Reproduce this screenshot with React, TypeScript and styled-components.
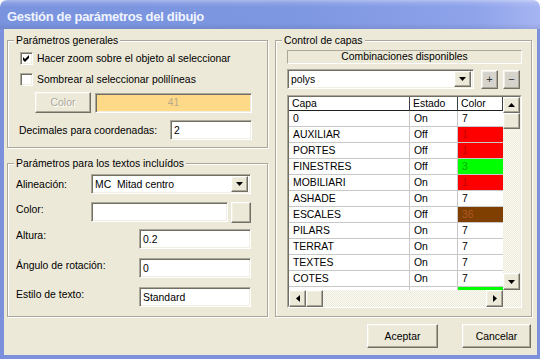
import React from 'react';
import styled, { createGlobalStyle, css } from 'styled-components';

const GlobalStyle = createGlobalStyle`
  html, body {
    margin: 0;
    padding: 0;
    background: #fff;
  }
  body {
    font-family: "Liberation Sans", Arial, sans-serif;
    font-size: 10.4px;
    color: #000;
  }
`;

const raised = css`
  box-sizing: border-box;
  border-style: solid;
  border-width: 1px;
  border-color: #fff #716f64 #716f64 #fff;
  box-shadow: inset -1px -1px 0 #aca899, inset 1px 1px 0 #f1efe2;
  background: #ece9d8;
`;

const sunken = css`
  box-sizing: border-box;
  border-style: solid;
  border-width: 1px;
  border-color: #aca899 #fff #fff #aca899;
  box-shadow: inset 1px 1px 0 #716f64, inset -1px -1px 0 #f1efe2;
`;

const Window = styled.div`
  width: 540px;
  height: 359px;
  display: flex;
  flex-direction: column;
`;

const TitleBar = styled.div`
  height: 29px;
  flex: none;
  box-sizing: border-box;
  border-radius: 7px 7px 0 0;
  padding: 4px 0 0 7px;
  display: flex;
  align-items: center;
  background:
    linear-gradient(180deg, rgba(255,255,255,.35) 0, rgba(255,255,255,.12) 3px, rgba(255,255,255,0) 7px, rgba(0,0,0,0) 23px, rgba(0,0,0,.08) 29px),
    linear-gradient(90deg, #7a93de 0%, #7e97e1 55%, #8ea3ea 88%, #a6b4f2 100%);
  font-family: "Liberation Sans", Arial, sans-serif;
  font-weight: bold;
  font-size: 13px;
  letter-spacing: -0.3px;
  color: #f0f4ff;
`;

const Frame = styled.div`
  flex: 1;
  border-style: solid;
  border-color: #7c91dc;
  border-width: 0 3px 4px 4px;
  background: #ece9d8;
  display: grid;
  grid-template-columns: 261px 257px;
  column-gap: 7px;
  align-content: start;
  padding: 5px 5px 0 3px;
`;

const Column = styled.div`
  display: flex;
  flex-direction: column;
`;

const GroupBox = styled.div<{ $mt: number; $h: number }>`
  margin-top: ${p => p.$mt}px;
  height: ${p => p.$h}px;
  box-sizing: border-box;
  border: 1px solid #aca899;
  box-shadow: inset 1px 1px 0 #fff, 1px 1px 0 #fff;
  display: flex;
  flex-direction: column;
`;

const Legend = styled.div`
  align-self: flex-start;
  margin: -7px 0 0 6px;
  padding: 0 2px;
  line-height: 13px;
  background: #ece9d8;
`;

const Row = styled.div<{ $mt: number; $ml?: number; $mr?: number }>`
  display: flex;
  align-items: center;
  margin-top: ${p => p.$mt}px;
  margin-left: ${p => p.$ml ?? 0}px;
  margin-right: ${p => p.$mr ?? 0}px;
`;

const FieldRow = styled(Row)`
  align-items: flex-start;
`;

const CheckBox = styled.div`
  width: 13px;
  height: 13px;
  ${sunken};
  background: #fff;
  display: flex;
  align-items: center;
  justify-content: center;
  margin-right: 4px;
`;

const Label = styled.div<{ $w?: number; $pt?: number }>`
  line-height: 13px;
  white-space: pre;
  ${p => (p.$w ? `width: ${p.$w}px; flex: none;` : 'flex: 1;')}
  padding-top: ${p => p.$pt ?? 0}px;
`;

const Button = styled.div<{ $w: number; $h: number; $disabled?: boolean }>`
  ${raised};
  width: ${p => p.$w}px;
  height: ${p => p.$h}px;
  flex: none;
  display: flex;
  align-items: center;
  justify-content: center;
  color: ${p => (p.$disabled ? '#aca899' : '#000')};
  text-shadow: ${p => (p.$disabled ? '1px 1px 0 #fff' : 'none')};
`;

const SmallButton = styled(Button)`
  background: #d6d3cc;
  color: #333;
  font-size: 11px;
`;

const Gap = styled.div<{ $w: number }>`
  flex: none;
  width: ${p => p.$w}px;
`;

const ColorSwatch = styled.div`
  ${sunken};
  width: 157px;
  height: 20px;
  margin-left: 4px;
  background: #fdd988;
  color: #b8ab86;
  display: flex;
  align-items: center;
  justify-content: center;
`;

const TextBox = styled.div<{ $w: number }>`
  ${sunken};
  width: ${p => p.$w}px;
  height: 20px;
  flex: none;
  background: #fff;
  padding-left: 3px;
  display: flex;
  align-items: center;
  white-space: pre;
`;

const Combo = styled(TextBox)`
  padding-right: 2px;
  justify-content: space-between;
`;

const ComboArrow = styled.div`
  ${raised};
  width: 17px;
  height: 16px;
  display: flex;
  align-items: center;
  justify-content: center;
`;

const Static = styled.div`
  margin: 3px 0 0 11px;
  width: 235px;
  height: 14px;
  box-sizing: border-box;
  border: 1px solid;
  border-color: #aca899 #fff #fff #aca899;
  display: flex;
  align-items: center;
  justify-content: center;
  line-height: 12px;
`;

const GridFrame = styled.div`
  margin: 6px 0 0 11px;
  width: 235px;
  height: 213px;
  box-sizing: border-box;
  border: 1px solid;
  border-color: #aca899 #fff #fff #aca899;
`;

const GridInner = styled.div`
  height: 100%;
  box-sizing: border-box;
  border: 1px solid;
  border-color: #716f64 #f1efe2 #f1efe2 #716f64;
  display: grid;
  grid-template-columns: 214px 17px;
  grid-template-rows: 193px 17px;
  background: #fff;
`;

const Table = styled.div`
  overflow: hidden;
  display: grid;
  grid-template-columns: 121px 48px 45px;
  grid-template-rows: 14px;
  grid-auto-rows: 16px;
`;

const HeadCell = styled.div`
  box-sizing: border-box;
  background: #fff;
  border-right: 1px solid #404040;
  border-bottom: 1px solid #202020;
  padding-left: 3px;
  display: flex;
  align-items: center;
  line-height: 12px;
`;

const Cell = styled.div<{ $bg?: string; $fg?: string; $last?: boolean }>`
  box-sizing: border-box;
  border-bottom: 1px solid #c8c8c8;
  border-right: ${p => (p.$last ? 'none' : '1px solid #c8c8c8')};
  background: ${p => p.$bg ?? '#fff'};
  color: ${p => p.$fg ?? '#000'};
  padding-left: 4px;
  display: flex;
  align-items: center;
  line-height: 13px;
`;

const track = css`
  background-color: #fff;
  background-image: repeating-conic-gradient(#ece9d8 0 25%, #fbfbf8 0 50%);
  background-size: 2px 2px;
`;

const VScroll = styled.div`
  ${track};
  display: flex;
  flex-direction: column;
`;

const HScroll = styled.div`
  ${track};
  display: flex;
`;

const Corner = styled.div`
  ${track};
`;

const ScrollBtn = styled.div<{ $w: number; $h: number }>`
  ${raised};
  width: ${p => p.$w}px;
  height: ${p => p.$h}px;
  flex: none;
  display: flex;
  align-items: center;
  justify-content: center;
`;

const Spacer = styled.div`
  flex: 1;
`;

const Footer = styled.div`
  grid-column: 1 / -1;
  display: flex;
  justify-content: flex-end;
  gap: 24px;
  margin-top: 7px;
  padding-right: 1px;
`;

const Check = () => (
  <svg width="7" height="7" viewBox="0 0 7 7">
    <polygon points="0,2 2,4 6,0 6,3 2,7 0,5" fill="#000" />
  </svg>
);

const Arrow = ({ dir }: { dir: 'up' | 'down' | 'left' | 'right' }) => {
  const pts = {
    down: '0,0 7,0 3.5,4',
    up: '0,4 7,4 3.5,0',
    left: '4,0 4,7 0,3.5',
    right: '0,0 0,7 4,3.5',
  }[dir];
  const vertical = dir === 'up' || dir === 'down';
  return (
    <svg width={vertical ? 7 : 4} height={vertical ? 4 : 7} viewBox={vertical ? '0 0 7 4' : '0 0 4 7'}>
      <polygon points={pts} fill="#000" />
    </svg>
  );
};

type Layer = { name: string; state: string; color: string; bg?: string; fg?: string };

const RED = { bg: '#ff0000', fg: '#c00000' };
const GREEN = { bg: '#00ff00', fg: '#00a800' };

const layers: Layer[] = [
  { name: '0', state: 'On', color: '7' },
  { name: 'AUXILIAR', state: 'Off', color: '1', ...RED },
  { name: 'PORTES', state: 'Off', color: '1', ...RED },
  { name: 'FINESTRES', state: 'Off', color: '3', ...GREEN },
  { name: 'MOBILIARI', state: 'On', color: '1', ...RED },
  { name: 'ASHADE', state: 'On', color: '7' },
  { name: 'ESCALES', state: 'Off', color: '36', bg: '#7f3f00', fg: '#b0582a' },
  { name: 'PILARS', state: 'On', color: '7' },
  { name: 'TERRAT', state: 'On', color: '7' },
  { name: 'TEXTES', state: 'On', color: '7' },
  { name: 'COTES', state: 'On', color: '7' },
  { name: '', state: '', color: '', ...GREEN },
];

const App = () => {
  return (
    <>
      <GlobalStyle />
      <Window>
        <TitleBar>Gestión de parámetros del dibujo</TitleBar>
        <Frame>
          <Column>
            <GroupBox $mt={6} $h={108}>
              <Legend>Parámetros generales</Legend>
              <Row $mt={5} $ml={12}>
                <CheckBox><Check /></CheckBox>
                <Label>Hacer zoom sobre el objeto al seleccionar</Label>
              </Row>
              <Row $mt={8} $ml={12}>
                <CheckBox />
                <Label>Sombrear al seleccionar polilíneas</Label>
              </Row>
              <Row $mt={6} $ml={27}>
                <Button $w={56} $h={21} $disabled>Color</Button>
                <ColorSwatch>41</ColorSwatch>
              </Row>
              <Row $mt={7} $ml={11} $mr={15}>
                <Label>Decimales para coordenadas:</Label>
                <TextBox $w={82}>2</TextBox>
              </Row>
            </GroupBox>

            <GroupBox $mt={15} $h={154}>
              <Legend>Parámetros para los textos incluídos</Legend>
              <Row $mt={4} $ml={8}>
                <Label $w={75}>Alineación:</Label>
                <Combo $w={160}>
                  MC  Mitad centro
                  <ComboArrow><Arrow dir="down" /></ComboArrow>
                </Combo>
              </Row>
              <FieldRow $mt={8} $ml={8}>
                <Label $w={75} $pt={1}>Color:</Label>
                <TextBox $w={137} />
                <Gap $w={3} />
                <Button $w={20} $h={21} />
              </FieldRow>
              <FieldRow $mt={6} $ml={8}>
                <Label $w={123} $pt={0}>Altura:</Label>
                <TextBox $w={112}>0.2</TextBox>
              </FieldRow>
              <FieldRow $mt={9} $ml={8}>
                <Label $w={123} $pt={1}>Ángulo de rotación:</Label>
                <TextBox $w={112}>0</TextBox>
              </FieldRow>
              <FieldRow $mt={9} $ml={8}>
                <Label $w={123} $pt={1}>Estilo de texto:</Label>
                <TextBox $w={112}>Standard</TextBox>
              </FieldRow>
            </GroupBox>
          </Column>

          <Column>
            <GroupBox $mt={6} $h={277}>
              <Legend>Control de capas</Legend>
              <Static>Combinaciones disponibles</Static>
              <Row $mt={5} $ml={11}>
                <Combo $w={187}>
                  polys
                  <ComboArrow><Arrow dir="down" /></ComboArrow>
                </Combo>
                <Gap $w={7} />
                <SmallButton $w={17} $h={19}>+</SmallButton>
                <Gap $w={5} />
                <SmallButton $w={17} $h={19}>−</SmallButton>
              </Row>
              <GridFrame>
                <GridInner>
                  <Table>
                    <HeadCell>Capa</HeadCell>
                    <HeadCell>Estado</HeadCell>
                    <HeadCell>Color</HeadCell>
                    {layers.map((l, i) => (
                      <React.Fragment key={i}>
                        <Cell>{l.name}</Cell>
                        <Cell>{l.state}</Cell>
                        <Cell $bg={l.bg} $fg={l.fg} $last>{l.color}</Cell>
                      </React.Fragment>
                    ))}
                  </Table>
                  <VScroll>
                    <ScrollBtn $w={17} $h={16}><Arrow dir="up" /></ScrollBtn>
                    <ScrollBtn $w={17} $h={16} />
                    <Spacer />
                    <ScrollBtn $w={17} $h={17}><Arrow dir="down" /></ScrollBtn>
                  </VScroll>
                  <HScroll>
                    <ScrollBtn $w={17} $h={17}><Arrow dir="left" /></ScrollBtn>
                    <ScrollBtn $w={17} $h={17} />
                    <Spacer />
                    <ScrollBtn $w={17} $h={17}><Arrow dir="right" /></ScrollBtn>
                  </HScroll>
                  <Corner />
                </GridInner>
              </GridFrame>
            </GroupBox>
          </Column>

          <Footer>
            <Button $w={71} $h={24}>Aceptar</Button>
            <Button $w={69} $h={24}>Cancelar</Button>
          </Footer>
        </Frame>
      </Window>
    </>
  );
};

export default App;
